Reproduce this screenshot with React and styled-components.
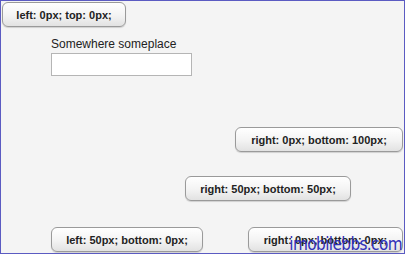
import React from 'react'
import styled, { createGlobalStyle } from 'styled-components'

const Global = createGlobalStyle`
  html, body { margin: 0; padding: 0; background: #f4f4f4; }
  body { font-family: "Liberation Sans", Arial, sans-serif; }
`

const Stage = styled.div`
  position: relative;
  box-sizing: border-box;
  width: 405px;
  height: 254px;
  border: 1px solid #5b5bc2;
  background: #f4f4f4;
  overflow: hidden;
`

const Field = styled.div`
  display: flex;
  flex-direction: column;
  gap: 2px;
  padding: 36px 0 0 50px;
`

const Label = styled.label`
  font-size: 12px;
  color: #222;
  line-height: 14px;
`

const TextBox = styled.input`
  box-sizing: border-box;
  width: 141px;
  height: 23px;
  border: 1px solid #b5b5b5;
  background: #fff;
  outline: none;
`

const PosButton = styled.button`
  position: absolute;
  box-sizing: border-box;
  height: 25px;
  padding: 0 13px;
  border: 1px solid #9a9a9a;
  border-radius: 6px;
  background: linear-gradient(#ffffff, #f3f3f3 55%, #e2e2e2);
  box-shadow: 0 1px 1px rgba(0, 0, 0, 0.15);
  font-family: "Liberation Sans", Arial, sans-serif;
  font-weight: bold;
  font-size: 11px;
  color: #222;
  white-space: nowrap;
  ${p => p.$left != null && `left: ${p.$left}px;`}
  ${p => p.$right != null && `right: ${p.$right}px;`}
  ${p => p.$top != null && `top: ${p.$top}px;`}
  ${p => p.$bottom != null && `bottom: ${p.$bottom}px;`}
  ${p => p.$w && `width: ${p.$w}px;`}
`

/* site watermark stamped over the corner of the screenshot */
const Watermark = styled.span`
  position: absolute;
  right: 2px;
  bottom: 0;
  line-height: 18px;
  font-family: "DejaVu Sans Condensed", "Liberation Sans Narrow", sans-serif;
  font-size: 17px;
  color: #3030b8;
  letter-spacing: -0.6px;
  pointer-events: none;
`

export default function App() {
  return (
    <>
      <Global />
      <Stage>
        <PosButton $left={1} $top={1} $w={124}>left: 0px; top: 0px;</PosButton>
        <Field>
          <Label>Somewhere someplace</Label>
          <TextBox type="text" />
        </Field>
        <PosButton $right={1} $bottom={101} $w={168}>right: 0px; bottom: 100px;</PosButton>
        <PosButton $right={53} $bottom={52} $w={166}>right: 50px; bottom: 50px;</PosButton>
        <PosButton $left={50} $bottom={1} $w={152}>left: 50px; bottom: 0px;</PosButton>
        <PosButton $right={1} $bottom={1} $w={155}>right: 0px; bottom: 0px;</PosButton>
        <Watermark>imobilebbs.com</Watermark>
      </Stage>
    </>
  )
}
